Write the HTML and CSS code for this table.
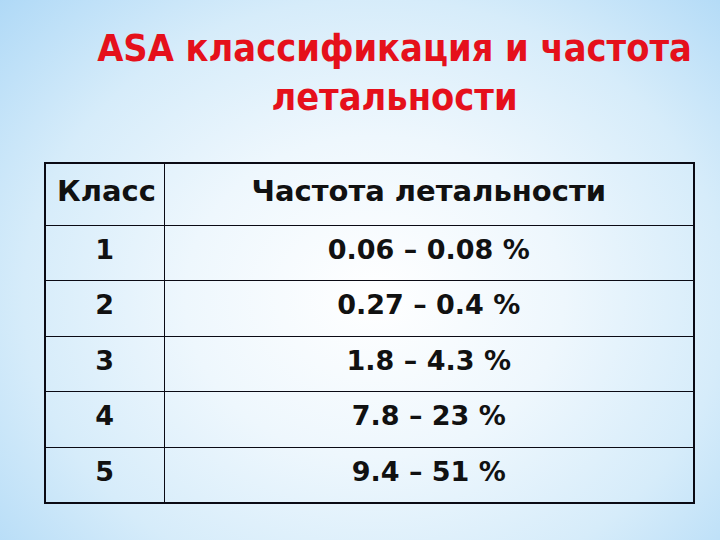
FILE: index.html
```html
<!DOCTYPE html>
<html lang="ru">
<head>
<meta charset="utf-8">
<link rel="stylesheet" href="styles.css">
</head>
<body>
<div class="slide">
  <h1 class="title">ASA классификация и частота<br>летальности</h1>
  <table class="asa">
    <tr class="head"><th class="c1">Класс</th><th class="c2">Частота летальности</th></tr>
    <tr><td class="c1">1</td><td class="c2">0.06 – 0.08 %</td></tr>
    <tr><td class="c1">2</td><td class="c2">0.27 – 0.4 %</td></tr>
    <tr><td class="c1">3</td><td class="c2">1.8 – 4.3 %</td></tr>
    <tr><td class="c1">4</td><td class="c2">7.8 – 23 %</td></tr>
    <tr><td class="c1">5</td><td class="c2">9.4 – 51 %</td></tr>
  </table>
</div>
</body>
</html>
```
FILE: styles.css
```css
html, body { margin: 0; padding: 0; }
body { width: 720px; height: 540px; overflow: hidden; }
.slide {
  width: 720px; height: 540px; box-sizing: border-box;
  padding: 24px 25px 0 44px;
  background: radial-gradient(ellipse 75% 85% at 52% 55%, #ffffff 0%, #eef7fd 35%, #d6ecfa 65%, #a9d6f6 100%);
}
.title {
  margin: 0 0 0 50px;
  font-family: "DejaVu Sans Condensed", "DejaVu Sans", sans-serif;
  font-weight: bold;
  font-size: 37.6px;
  line-height: 49px;
  color: #e5101b;
  text-align: center;
}
.asa {
  margin-top: 40px;
  width: 651px;
  border-collapse: collapse;
  border: 2px solid #0a0a14;
  font-family: "DejaVu Sans", sans-serif;
  font-weight: bold;
  color: #111;
}
.asa th, .asa td {
  border: 1px solid #0a0a14;
  padding: 0;
  vertical-align: top;
}
.asa th { font-size: 29px; height: 62px; box-sizing: border-box; padding-top: 10px; }
.asa td { font-size: 27px; height: 55.6px; box-sizing: border-box; padding-top: 8px; text-align: center; }
.asa .c1 { width: 119px; }
.asa th.c1 { text-align: left; padding-left: 11px; }
.asa th.c2 { text-align: center; }
```
